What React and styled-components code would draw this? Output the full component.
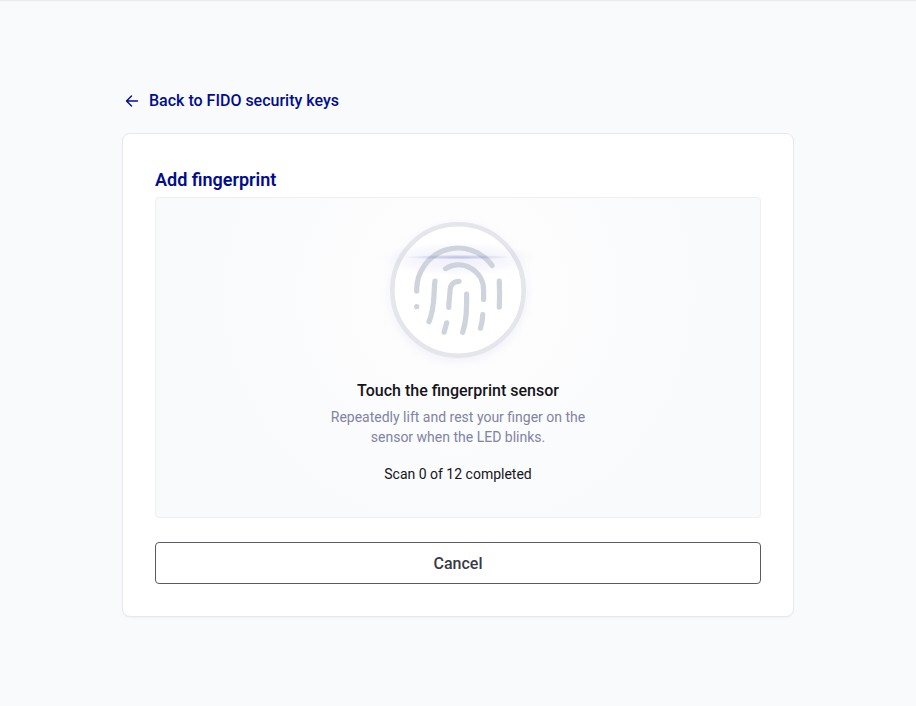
import React from 'react'
import styled, { createGlobalStyle } from 'styled-components'

const GlobalStyle = createGlobalStyle`
  *, *::before, *::after {
    box-sizing: border-box;
  }
  body {
    margin: 0;
    background: #f9fafc;
    color: #15141a;
    font-family: Roboto, "Liberation Sans", sans-serif;
    font-size: 14px;
    line-height: 20px;
  }
`

const Page = styled.div`
  min-height: 100vh;
  border-top: 1px solid #e9eaee;
  padding: 88px 24px;
  box-shadow: inset 0 1px 1px rgba(20, 20, 60, 0.02);
`

const Content = styled.main`
  max-width: 672px;
  margin: 0 auto;
`

const BackLink = styled.a`
  display: flex;
  align-items: center;
  gap: 8px;
  width: fit-content;
  height: 24px;
  padding-left: 1px;
  color: #000c8f;
  font-size: 16px;
  font-weight: 500;
  line-height: 24px;
  text-decoration: none;
`

const ArrowIcon = styled.svg`
  width: 18px;
  height: 18px;
  fill: none;
  stroke: currentColor;
  stroke-width: 1.4;
  stroke-linecap: round;
  stroke-linejoin: round;
`

const Card = styled.section`
  margin-top: 20px;
  padding: 32px;
  border: 1px solid #e8e8ee;
  border-radius: 8px;
  background: #fff;
  box-shadow: 0 1px 2px rgba(20, 20, 60, 0.04);
`

const Title = styled.h1`
  margin: 0;
  color: #000c8f;
  font-size: 18px;
  font-weight: 600;
  line-height: 28px;
`

const Panel = styled.div`
  display: flex;
  flex-direction: column;
  align-items: center;
  margin-top: 3px;
  padding: 12px 24px 33px;
  border: 1px solid #eeeff2;
  border-radius: 4px;
  background: radial-gradient(circle at 50% 30%, #fefefe 0%, #f9fafc 70%);
  text-align: center;
`

const Sensor = styled.svg`
  width: 160px;
  height: 160px;
`

const Strokes = styled.g`
  fill: none;
  stroke: #cfd3dc;
  stroke-width: 5.2;
  stroke-linecap: round;
  stroke-linejoin: round;
`

const Prompt = styled.h2`
  margin: 9px 0 0;
  font-size: 16px;
  font-weight: 500;
  line-height: 24px;
`

const Hint = styled.p`
  max-width: 272px;
  margin: 4px 0 0;
  color: #8083a3;
`

const Progress = styled.p`
  margin: 17px 0 0;
`

const CancelButton = styled.button`
  display: block;
  width: 100%;
  margin-top: 24px;
  padding: 9px 16px 7px;
  border: 1px solid #5b5966;
  border-radius: 4px;
  background: #fff;
  color: #3a3944;
  font: 500 16px/24px Roboto, "Liberation Sans", sans-serif;
  cursor: pointer;
`

const Fingerprint = () => (
  <Sensor viewBox="0 0 160 160" aria-hidden="true">
    <defs>
      <filter id="glow" x="-20%" y="-20%" width="140%" height="140%">
        <feGaussianBlur stdDeviation="5" />
      </filter>
      <radialGradient id="haze">
        <stop offset="0" stopColor="#5058c8" stopOpacity="0.09" />
        <stop offset="0.5" stopColor="#5058c8" stopOpacity="0.06" />
        <stop offset="1" stopColor="#5058c8" stopOpacity="0" />
      </radialGradient>
      <radialGradient id="beam">
        <stop offset="0" stopColor="#3a44b0" stopOpacity="0.3" />
        <stop offset="1" stopColor="#3a44b0" stopOpacity="0" />
      </radialGradient>
    </defs>
    <circle cx="80" cy="83" r="68" fill="#e3e4f6" opacity="0.5" filter="url(#glow)" />
    <circle cx="80" cy="80" r="65.7" fill="#fff" stroke="#e5e6eb" strokeWidth="4.6" />
    <ellipse cx="80" cy="49" rx="78" ry="17" fill="url(#haze)" />
    <Strokes>
      <path d="M38.7 81v-1.2a41.5 41.5 0 0 1 75.4-24.2" />
      <path d="M67.6 58.6a25 25 0 0 1 38 21.4v9.4" />
      <path d="M57 71c-1.6 10 .4 26-6 40.7" />
      <path d="M81 71.3c-5.4 0-8.7 3.2-8.9 8.7-.2 6-1.3 11.3-1.3 17.3" />
      <path d="M88.6 84.2c0 14 .2 26-4 38.1" />
      <path d="M121.3 71.2c.4 9 .4 17 0 26" />
      <path d="M68.7 112.8l-2.6 9.4" />
      <path d="M104.7 104.6c-.2 5-.8 9-2.2 13.6" />
      <path d="M38.7 96.7h.01" />
    </Strokes>
    <ellipse cx="80" cy="47.2" rx="54" ry="2.4" fill="url(#beam)" />
  </Sensor>
)

const App = () => (
  <>
    <GlobalStyle />
    <Page>
      <Content>
        <BackLink href="#keys">
          <ArrowIcon viewBox="0 0 18 18" aria-hidden="true">
            <path d="M14.5 9H3.5M8.5 4L3.5 9l5 5" />
          </ArrowIcon>
          Back to FIDO security keys
        </BackLink>
        <Card>
          <Title>Add fingerprint</Title>
          <Panel>
            <Fingerprint />
            <Prompt>Touch the fingerprint sensor</Prompt>
            <Hint>Repeatedly lift and rest your finger on the sensor when the LED blinks.</Hint>
            <Progress role="status">Scan 0 of 12 completed</Progress>
          </Panel>
          <CancelButton type="button">Cancel</CancelButton>
        </Card>
      </Content>
    </Page>
  </>
)

export default App
